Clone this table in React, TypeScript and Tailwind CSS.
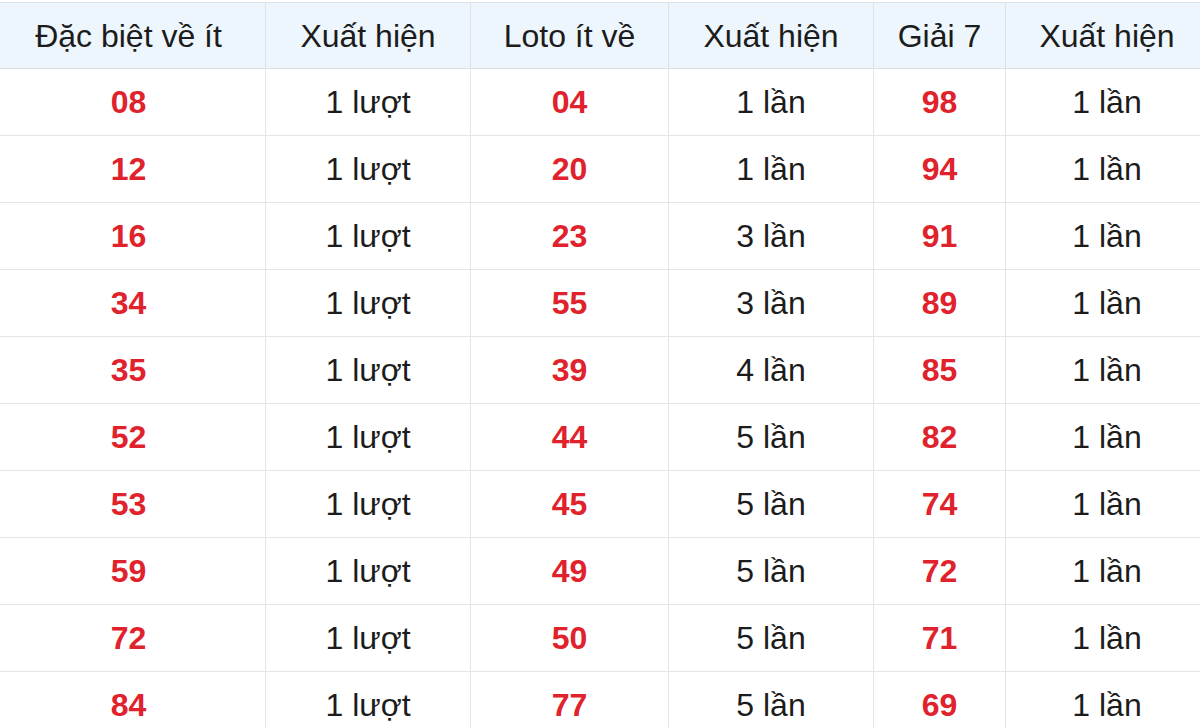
const HEADERS = ['Đặc biệt về ít', 'Xuất hiện', 'Loto ít về', 'Xuất hiện', 'Giải 7', 'Xuất hiện']

const ROWS: [string, string, string, string, string, string][] = [
  ['08', '1 lượt', '04', '1 lần', '98', '1 lần'],
  ['12', '1 lượt', '20', '1 lần', '94', '1 lần'],
  ['16', '1 lượt', '23', '3 lần', '91', '1 lần'],
  ['34', '1 lượt', '55', '3 lần', '89', '1 lần'],
  ['35', '1 lượt', '39', '4 lần', '85', '1 lần'],
  ['52', '1 lượt', '44', '5 lần', '82', '1 lần'],
  ['53', '1 lượt', '45', '5 lần', '74', '1 lần'],
  ['59', '1 lượt', '49', '5 lần', '72', '1 lần'],
  ['72', '1 lượt', '50', '5 lần', '71', '1 lần'],
  ['84', '1 lượt', '77', '5 lần', '69', '1 lần'],
]

// table is a bit wider than the window, it bleeds 8px on each side
const COLS = 'grid grid-cols-[273px_205px_198px_205px_132px_203px]'

export default function App() {
  return (
    <div
      className="h-[728px] w-[1200px] overflow-hidden bg-white pt-[2px] text-[32px] text-[#1c1c1c]"
      style={{ fontFamily: '"Liberation Sans", Arial, sans-serif' }}
    >
      <div className="-ml-[8px] w-[1216px] border-t border-[#dde1e6]">
        {/* header */}
        <div className={`${COLS} h-[66px] border-b border-[#dde1e6] bg-[#eef6fd]`}>
          {HEADERS.map((h, i) => (
            <div
              key={i}
              className={`flex items-center justify-center ${i > 0 ? 'border-l border-[#dde1e6]' : ''}`}
            >
              {h}
            </div>
          ))}
        </div>

        {/* body */}
        {ROWS.map((row, r) => (
          <div key={r} className={`${COLS} h-[67px] border-b border-[#e3e5e8]`}>
            {row.map((cell, i) => (
              <div
                key={i}
                className={`flex items-center justify-center ${i > 0 ? 'border-l border-[#e3e5e8]' : ''} ${
                  i % 2 === 0 ? 'font-bold text-[#e0222c]' : ''
                }`}
              >
                {cell}
              </div>
            ))}
          </div>
        ))}
      </div>
    </div>
  )
}
